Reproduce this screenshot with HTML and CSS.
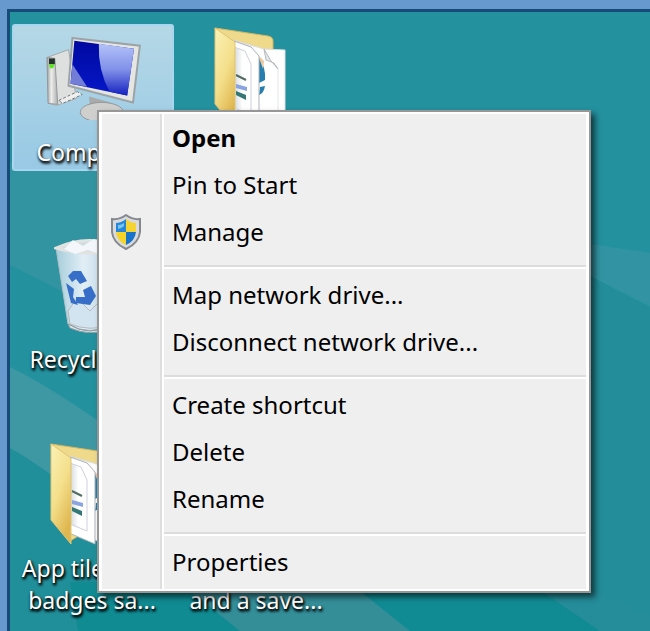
FILE: index.html
```html
<!DOCTYPE html>
<html lang="en">
<head>
<meta charset="utf-8">
<title>Desktop</title>
<link rel="stylesheet" href="styles.css">
</head>
<body>
<svg width="0" height="0" class="defs" aria-hidden="true">
  <defs>
    <linearGradient id="yellow" x1="0" y1="0" x2="0.5" y2="1"><stop offset="0" stop-color="#fbf2b6"/><stop offset="0.55" stop-color="#f4df8b"/><stop offset="1" stop-color="#dfb750"/></linearGradient>
    <linearGradient id="paper" x1="0" x2="1"><stop offset="0" stop-color="#d4d8dc"/><stop offset="0.5" stop-color="#fff"/></linearGradient>
    <linearGradient id="screen" x1="0" x2="0" y1="0" y2="1"><stop offset="0" stop-color="#0009a0"/><stop offset="1" stop-color="#0618c8"/></linearGradient>
    <linearGradient id="glare" x1="0" x2="0" y1="0" y2="1"><stop offset="0" stop-color="#b3c2f8"/><stop offset="0.5" stop-color="#8090e8"/><stop offset="1" stop-color="#1420c0"/></linearGradient>
    <linearGradient id="metal" x1="0" x2="1"><stop offset="0" stop-color="#9c9da0"/><stop offset="0.4" stop-color="#eeeeec"/><stop offset="1" stop-color="#aaabac"/></linearGradient>
    <linearGradient id="glass" x1="0" x2="1"><stop offset="0" stop-color="#a5cddb"/><stop offset="0.4" stop-color="#e1eef6"/><stop offset="1" stop-color="#adcbdd"/></linearGradient>
    <symbol id="folder" viewBox="0 0 72 106">
      <path d="M1 1 54 9Q59 10 59 14V75L20 98Z" fill="#efd98a" stroke="#d4b65f"/>
      <path d="M19 13 50 22 71 23V104L19 90Z" fill="url(#paper)" stroke="#d9dddf"/>
      <path d="M50 22 57 34 64 42 60 36 52 33Z" fill="#e4e7e9" stroke="#b5bbc0"/>
      <path d="M64 42V95" stroke="#e3e5e7"/>
      <path d="M45 31q7 9 6 22l-6 3zM46 60l5-1q-1 7-6 9z" fill="#267eaf"/>
      <path d="M44 28l6 6-1 8z" fill="#edc79d"/>
      <path d="M20 14 37 20 45 29V101L19 90Z" fill="#fff" stroke="#aeb4bb"/>
      <path d="M20 20 31 24 37 37V88L20 81Z" fill="url(#paper)" stroke="#cfcfe0"/>
      <path d="M22 48l10 5" stroke="#526c63" stroke-width="2"/>
      <path d="M22 57l11 3v4l-11-3z" fill="#89a4df"/><path d="M22 64l10 4v5l-10-5z" fill="#347775"/>
      <path d="M1 1 21 15V101L1 77Z" fill="url(#yellow)" stroke="#dfc574"/>
    </symbol>
  </defs>
</svg>
<main class="desktop">
  <svg class="wallpaper" viewBox="0 0 640 619" preserveAspectRatio="none" aria-hidden="true">
    <path d="M0 150H90V300Q55 280 0 253Z" fill="#3294a1"/>
    <path d="M0 355Q50 380 110 425V520L90 500Q34 460 0 436Z" fill="#3e98a3"/>
    <path d="M0 436Q34 455 90 500V619H0Z" fill="#218f99"/>
    <path d="M580 232 640 241V294L580 264Z" fill="#3294a3"/>
    <path d="M580 264 640 296V619H580Z" fill="#238d99"/>
    <path d="M60 570H250V619H68Z" fill="#108b92"/>
    <path d="M175 575H345L400 619H230Z" fill="#348e98"/>
    <path d="M345 575H530L590 619H400Z" fill="#118b93"/>
    <path d="M525 575H580L640 605V619H590Z" fill="#258c99"/>
  </svg>
  <div class="icons">
    <button class="icon selected">
      <svg class="computer" viewBox="0 0 102 88" aria-hidden="true">
        <path d="M6 24 28 16 36 66 16 73 8 71Z" fill="#dedfdf" stroke="#a5a9ab"/>
        <path d="M6 24 14 25 17 72 7 71Z" fill="url(#metal)" stroke="#94999c"/>
        <path d="M8 25h6v6H8z" fill="#26322c"/><path d="M8 31h6l-2 4H9z" fill="#5fe51e"/>
        <path d="M18 68 37 59 42 62 22 71Z" fill="#eee" stroke="#70777b" stroke-dasharray="3 2"/>
        <path d="M49 64 71 70 68 79 50 75Z" fill="#aaa"/>
        <ellipse cx="62" cy="80" rx="22" ry="10" fill="#cfcfcd" stroke="#929898"/>
        <path d="M32 4 101 12 94 70 28 53Z" fill="#e5e5e2" stroke="#9ca3a6" stroke-width="2"/>
        <path d="M34 7 95 15 88 63 30 51Z" fill="url(#screen)"/>
        <path d="M59 10 95 15 88 63 70 59Q58 37 59 10Z" fill="url(#glare)"/>
        <path d="M32 31 47 54 30 51Z" fill="#727dd7"/>
      </svg>
      <span>Computer</span>
    </button>
    <button class="icon plain">
      <svg class="folder" aria-hidden="true"><use href="#folder"/></svg>
      <span>and a save...</span>
    </button>
    <button class="icon recycle">
      <svg class="bin" viewBox="0 0 72 94" aria-hidden="true">
        <path d="M2 9 14 85Q36 98 58 85L70 9Z" fill="url(#glass)" stroke="#b0bfc6"/>
        <path d="M14 72 23 59 36 72 47 61 59 72 56 86Q36 93 16 85Z" fill="#d2e4f0" stroke="#b8b9bb"/>
        <path d="M2 9Q36-6 70 9 36 19 2 9Z" fill="#d0dde1" stroke="#e2e2e1" stroke-width="3"/>
        <path d="M10 10 19 1 29 7 40 0 52 5 61 10 48 16 34 11 21 15Z" fill="#f3f7fb"/>
        <path d="M14 37 19 32H27L33 42 26 45 22 40 18 43ZM12 44 20 50 19 58 24 66 17 64ZM29 51 37 47 42 57 36 66 22 64V58L31 58Z" fill="#376fc8"/>
        <path d="M14 85Q36 99 58 85L57 90Q36 98 16 89Z" fill="#e2e5e7" stroke="#8e9ba0"/>
      </svg>
      <span>Recycle Bin</span>
    </button>
    <button class="icon samples">
      <svg class="folder" aria-hidden="true"><use href="#folder"/></svg>
      <span>App tiles and<br>badges sa...</span>
    </button>
  </div>
  <div class="menu" role="menu">
    <div class="panel">
      <button role="menuitem" class="item default">Open</button>
      <button role="menuitem" class="item">Pin to Start</button>
      <button role="menuitem" class="item">
        <svg class="shield" viewBox="0 0 32 36" aria-hidden="true">
          <path d="M16 1Q23 6 30 5V18Q29 29 16 35 3 29 2 18V5Q9 6 16 1Z" fill="#d8dadd" stroke="#85888d" stroke-width="2"/>
          <path d="M16 5V18H6V9Q11 9 16 5Z" fill="#2586da"/><path d="M16 5Q21 9 26 9V18H16Z" fill="#f5d333"/>
          <path d="M6 18H16V31Q7 27 6 18Z" fill="#f6d329"/><path d="M16 18H26Q25 27 16 31Z" fill="#1874cb"/>
          <path d="M8 11Q12 11 14 9V12Q11 15 8 15Z" fill="#78c5ef"/>
        </svg>
        Manage</button>
      <hr>
      <button role="menuitem" class="item">Map network drive...</button>
      <button role="menuitem" class="item">Disconnect network drive...</button>
      <hr>
      <button role="menuitem" class="item">Create shortcut</button>
      <button role="menuitem" class="item">Delete</button>
      <button role="menuitem" class="item">Rename</button>
      <hr>
      <button role="menuitem" class="item">Properties</button>
    </div>
  </div>
</main>
</body>
</html>
```
FILE: styles.css
```css
* { box-sizing: border-box; }
body {
  margin: 0;
  min-height: 100vh;
  display: flex;
  padding: 9px 0 0 7px;
  background: #6799cf;
  font-family: "Noto Sans", sans-serif;
  overflow: hidden;
}
.defs { position: absolute; }
button {
  font: inherit;
  border: 0;
  padding: 0;
  background: none;
  color: inherit;
}
.desktop {
  position: relative;
  flex: 1;
  height: calc(100vh - 9px);
  border: solid #164b78;
  border-width: 3px 0 0 3px;
  background: #24919f;
  overflow: hidden;
}
.wallpaper {
  position: absolute;
  inset: 0;
  width: 100%;
  height: 100%;
}
.icons {
  position: relative;
  display: grid;
  grid-template-columns: 164px 164px;
  grid-template-rows: 148px 209px 240px;
  padding-top: 12px;
  align-items: start;
}
.icon {
  display: flex;
  flex-direction: column;
  align-items: center;
  font-size: 23px;
  line-height: 32px;
  color: #fff;
  text-shadow: 1px 2px 3px #000, 1px 2px 3px #000;
  white-space: nowrap;
}
.selected {
  height: 147px;
  margin-left: 2px;
  padding: 8px 4px 0 0;
  border: 2px solid #a9d5ee;
  border-radius: 3px;
  background: linear-gradient(#b5d8e6, #98c9e5);
}
.computer { width: 100px; height: 86px; margin-bottom: 16px; }
.folder { width: 72px; height: 106px; }
.plain { grid-row: 1 / 4; grid-column: 2; padding-top: 3px; }
.plain .folder { margin: 0 12px 451px 0; }
.recycle { grid-row: 2; padding: 67px 4px 0 0; }
.bin { width: 72px; height: 94px; margin-bottom: 10px; }
.samples { grid-row: 3; padding-top: 62px; }
.samples .folder { margin: 0 12px 3px 0; }
.menu {
  position: absolute;
  top: 98px;
  left: 87px;
  width: 494px;
  padding: 2px 3px;
  border: 2px solid #979797;
  background: #fff;
  box-shadow: 4px 4px 6px #0009;
  color: #000;
}
.panel {
  padding: 3px 0 1px;
  background: linear-gradient(90deg, #efefef 58px, #dedede 58px 60px, #fff 60px 62px, #efefef 62px);
}
.item {
  position: relative;
  display: block;
  width: 100%;
  padding: 0 0 6px 70px;
  font-size: 24px;
  line-height: 41px;
  text-align: left;
}
.default { font-weight: 700; }
.shield {
  position: absolute;
  left: 8px;
  top: 3px;
  width: 32px;
  height: 36px;
}
hr {
  height: 4px;
  margin: 7px 0 5px 62px;
  border: solid;
  border-color: #dcdcdc #fff #fff;
  border-width: 2px 0;
}
```
